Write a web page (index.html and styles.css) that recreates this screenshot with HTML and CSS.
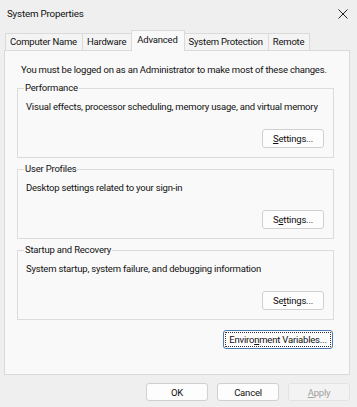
FILE: index.html
```html
<!DOCTYPE html>
<html lang="en">
<head>
  <meta charset="UTF-8">
  <title>System Properties</title>
  <link rel="stylesheet" href="styles.css">
</head>
<body>
  <div class="window">
    <div class="titlebar">
      <span class="title">System Properties</span>
      <svg class="close" width="10" height="10" viewBox="0 0 10 10">
        <path d="M0.5 0.5 L9.5 9.5 M9.5 0.5 L0.5 9.5" stroke="#222" stroke-width="1" fill="none"/>
      </svg>
    </div>

    <div class="tabs">
      <div class="tab">Computer Name</div>
      <div class="tab">Hardware</div>
      <div class="tab active">Advanced</div>
      <div class="tab">System Protection</div>
      <div class="tab">Remote</div>
    </div>

    <div class="panel">
      <p class="note">You must be logged on as an Administrator to make most of these changes.</p>

      <fieldset class="group">
        <legend>Performance</legend>
        <p class="desc">Visual effects, processor scheduling, memory usage, and virtual memory</p>
        <div class="row"><button class="btn"><u>S</u>ettings...</button></div>
      </fieldset>

      <fieldset class="group">
        <legend>User Profiles</legend>
        <p class="desc">Desktop settings related to your sign-in</p>
        <div class="row"><button class="btn">S<u>e</u>ttings...</button></div>
      </fieldset>

      <fieldset class="group">
        <legend>Startup and Recovery</legend>
        <p class="desc">System startup, system failure, and debugging information</p>
        <div class="row"><button class="btn">Se<u>t</u>tings...</button></div>
      </fieldset>

      <div class="row env-row">
        <button class="btn focused">Enviro<u>n</u>ment Variables...</button>
      </div>
    </div>

    <div class="footer">
      <button class="btn wide">OK</button>
      <button class="btn wide">Cancel</button>
      <button class="btn wide" disabled><u>A</u>pply</button>
    </div>
  </div>
</body>
</html>
```

FILE: styles.css
```css
body {
  margin: 0;
  background: #efefef;
  font-family: Roboto, "Liberation Sans", sans-serif;
  font-size: 9.5px;
  letter-spacing: -0.2px;
  color: #111;
}

.window {
  width: 357px;
  height: 407px;
  background: #efefef;
  display: flex;
  flex-direction: column;
}

.titlebar {
  height: 31px;
  display: flex;
  align-items: flex-start;
  justify-content: space-between;
  padding: 7px 9px 0 7px;
  box-sizing: border-box;
}

.title {
  font-size: 9.8px;
  line-height: 13px;
}

.close {
  margin-top: 2px;
}

.tabs {
  display: flex;
  align-items: flex-end;
  padding-left: 5px;
  height: 19px;
}

.tab {
  height: 16px;
  line-height: 16px;
  padding: 0 5px 0 4px;
  border: 1px solid #dadada;
  border-bottom: none;
  margin-right: -1px;
  background: #f4f4f4;
}

.tab.active {
  height: 20px;
  line-height: 17px;
  padding: 0 6px 0 5px;
  background: #f9f9f9;
  position: relative;
  z-index: 1;
  margin-bottom: -1px;
}

.panel {
  margin-left: 4px;
  width: 346px;
  height: 325px;
  background: #f9f9f9;
  border: 1px solid #dadada;
  box-sizing: border-box;
  padding: 12px 15px 0 12px;
}

.note {
  margin: 0 0 4px 4px;
  line-height: 14px;
  white-space: nowrap;
}

.group {
  border: 1px solid #dcdcdc;
  margin: 0 0 4px 0;
  padding: 5px 9px 9px 8px;
  line-height: 14px;
}

.group legend {
  padding: 0 1px;
  margin-left: -2px;
  line-height: 14px;
}

.desc {
  margin: 0 0 15px 0;
  white-space: nowrap;
}

.row {
  display: flex;
  justify-content: flex-end;
}

.btn {
  font-family: inherit;
  font-size: 9.5px;
  letter-spacing: -0.2px;
  color: #111;
  background: #fdfdfd;
  border: 1px solid #d0d0d0;
  border-radius: 3px;
  height: 19px;
  width: 62px;
  padding: 0;
}

.btn.focused {
  width: 110px;
  border: 1px solid #4a7ab3;
  outline: 1px dotted #333;
  outline-offset: -3px;
}

.env-row {
  margin-top: 10px;
  padding-right: 1px;
}

.footer {
  display: flex;
  justify-content: flex-end;
  gap: 9px;
  padding: 8px 7px 0 0;
}

.btn.wide {
  height: 18px;
}

.btn:disabled {
  color: #a0a0a0;
  background: #f3f3f3;
  border-color: #e3e3e3;
}
```
